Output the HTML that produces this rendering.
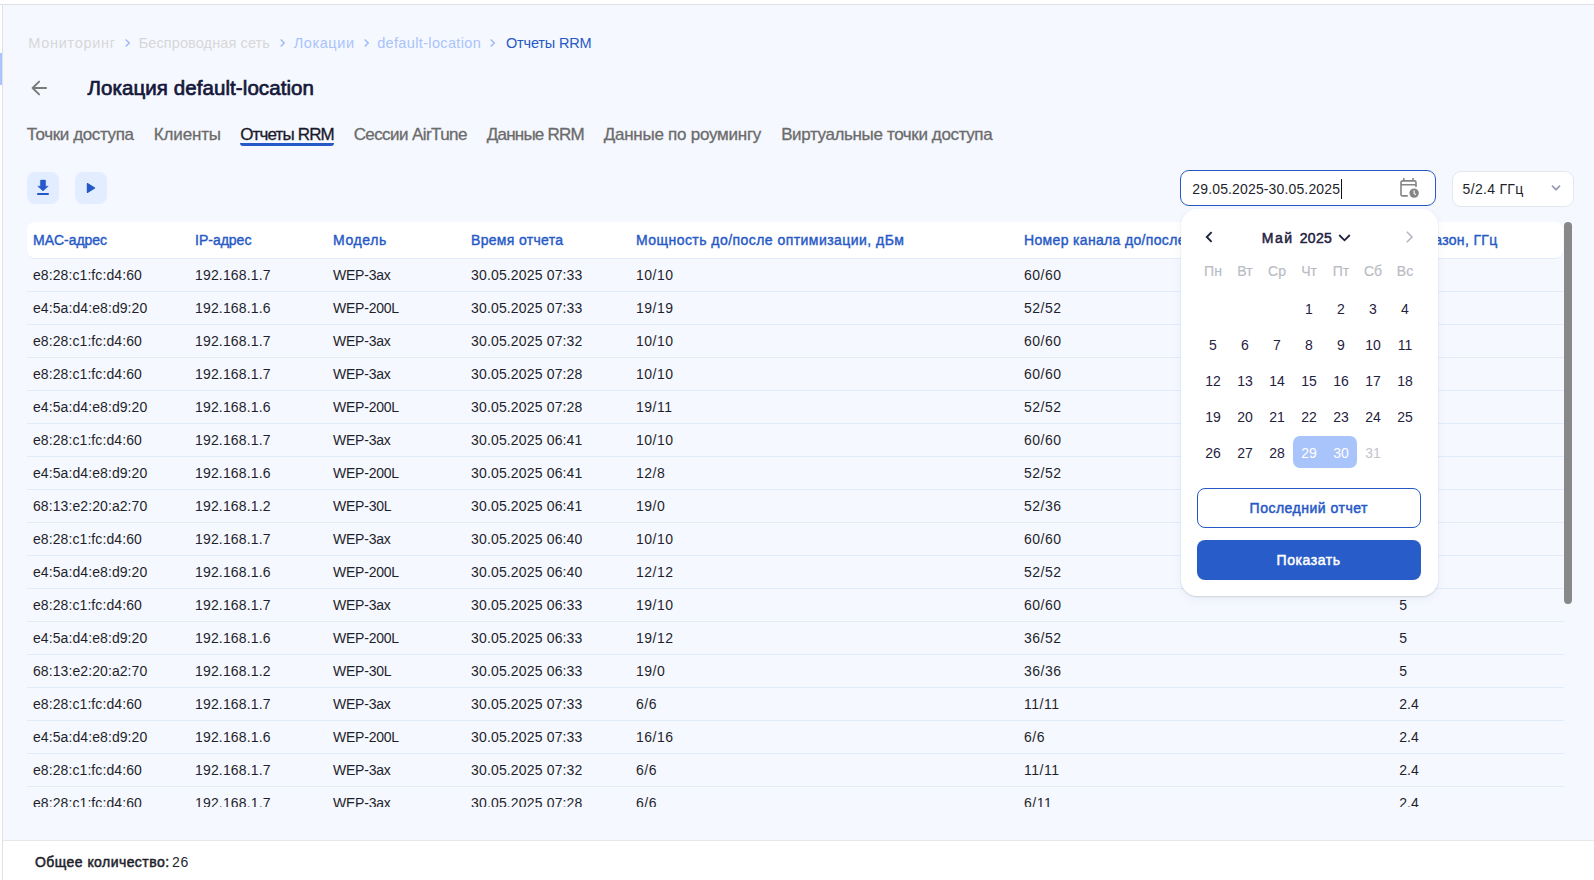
<!DOCTYPE html>
<html lang="ru"><head><meta charset="utf-8"><title>Отчеты RRM</title>
<style>
*{box-sizing:border-box;margin:0;padding:0}
html,body{width:1594px;height:880px;overflow:hidden}
body{background:#fff;font-family:"Liberation Sans",sans-serif;color:#1f1f2b;position:relative;font-size:14px}
.main{position:absolute;left:2px;top:4px;width:1592px;height:876px;background:#f5f8ff;border-left:1px solid #e0e1e4;border-top:1px solid #e0e1e4}
.topline{position:absolute;left:0;top:4px;width:3px;height:1px;background:#e0e1e4}
.sidehl{position:absolute;left:0;top:53px;width:2px;height:32px;background:#a9c5fc}
.abs{position:absolute;white-space:nowrap}
.t{position:absolute;white-space:nowrap}
.bc{top:34px;left:0;font-size:14.5px;line-height:18px;height:18px;color:#d7d7d7}
.bc .t{top:0}
.bc .l{color:#a9c4fb}
.bc .cur{color:#2759c6}
.bc svg{position:absolute;top:4px}
.title{top:75px;font-size:20.5px;line-height:26px;font-weight:400;-webkit-text-stroke:0.7px currentColor;color:#15183a}
.tab{top:124px;font-size:17px;line-height:22px;color:#6b6b6b;-webkit-text-stroke:0.3px currentColor}
.tab.act{color:#1a1a2a}
.tab.act:after{content:"";position:absolute;left:0;right:0;bottom:0;height:3px;border-radius:0 0 3px 3px;background:#2459c7}
.ibtn{position:absolute;top:172px;width:32px;height:32px;border-radius:8px;background:#e2edff}
.ibtn svg{position:absolute;left:0;top:0}
.inp{position:absolute;left:1180px;top:170px;width:256px;height:36px;border:1px solid #2759c6;border-radius:9px;background:#fff}
.inp .t{top:9px;font-size:14px;line-height:18px;color:#1f1f2b}
.inp .cur{position:absolute;left:160px;top:8px;width:1px;height:20px;background:#111}
.inp svg{position:absolute;left:218px;top:6px}
.select{position:absolute;left:1452px;top:171px;width:122px;height:36px;border:1px solid #e4e7ef;border-radius:9px;background:#fff}
.select .t{top:8px;font-size:14px;line-height:18px;color:#1f1f2b}
.select svg{position:absolute;left:97px;top:12px}
.thead{position:absolute;left:27px;top:222px;width:1536px;height:37px;background:#fff;border-radius:8px;border-bottom:1px solid #e3ecfb}
.thead .t{top:9px;font-size:14px;line-height:18px;font-weight:400;-webkit-text-stroke:0.4px currentColor;color:#2759c6}
.tbody{position:absolute;left:27px;top:259px;width:1537px;height:548px;overflow:hidden}
.tr{position:relative;height:33px;border-bottom:1px solid #e3ecfb}
.tr span{position:absolute;top:7px;font-size:14px;line-height:18px;color:#1f1f2b;white-space:nowrap}
.scroll{position:absolute;left:1564px;top:222px;width:8px;height:382px;border-radius:4px;background:#888}
.footer{position:absolute;left:3px;top:840px;width:1591px;height:40px;background:#fff;border-top:1px solid #e7e8ec}
.footer .t{top:12px;font-size:14px;line-height:18px;color:#1f1f2b}
.footer b{font-weight:400;-webkit-text-stroke:0.5px currentColor}
.pop{position:absolute;left:1181px;top:209px;width:257px;height:387px;background:#fff;border-radius:16px;box-shadow:0 1px 2px rgba(0,0,0,.13),0 3px 10px rgba(40,60,120,.06)}
.pop .hd{position:absolute;left:0;top:19px;width:100%;height:20px;font-size:14px;line-height:20px;font-weight:400;-webkit-text-stroke:0.5px currentColor;color:#1f2240}
.pop .hd .t{top:0}
.pop .hd svg{position:absolute}
.wd{position:absolute;left:16px;top:52px;width:224px;height:20px;display:flex}
.wd span{width:32px;text-align:center;font-size:14px;line-height:20px;color:#babcc5;-webkit-text-stroke:0.2px currentColor}
.wks{position:absolute;left:16px;top:83px;width:224px}
.wk{display:flex;height:32px;margin-bottom:4px}
.d{width:32px;height:32px;line-height:34px;text-align:center;font-size:14px;color:#1f2240}
.d.sel{background:#a9c4fb;color:#fff}
.d.s1{border-radius:7px 0 0 7px}
.d.s2{border-radius:0 7px 7px 0}
.d.dis{color:#c3c4cc}
.b1,.b2{position:absolute;left:16px;width:224px;height:40px;border-radius:8px;font-size:14px;line-height:18px;font-weight:400;-webkit-text-stroke:0.5px currentColor}
.b1 .t,.b2 .t{top:11px}
.b1{top:279px;border:1px solid #2759c6;color:#2759c6;background:#fff}
.b1 .t{top:10px}
.b2{top:331px;background:#285cc8;color:#fff}
</style></head><body>
<div class="sidehl"></div>
<div class="main"></div><div class="topline"></div>

<div class="abs bc">
<span id="bc1" class="t " style="left:28.33px;letter-spacing:0.690px;">Мониторинг</span>
<svg style="left:124px" width="7" height="10" viewBox="0 0 7 10"><path d="M1.7 1.5L5.2 5 1.7 8.5" fill="none" stroke="#9dbaf9" stroke-width="1.5"/></svg>
<span id="bc2" class="t " style="left:138.63px;letter-spacing:0.109px;">Беспроводная сеть</span>
<svg style="left:279px" width="7" height="10" viewBox="0 0 7 10"><path d="M1.7 1.5L5.2 5 1.7 8.5" fill="none" stroke="#9dbaf9" stroke-width="1.5"/></svg>
<span id="bc3" class="t l" style="left:293.72px;letter-spacing:0.576px;">Локации</span>
<svg style="left:363px" width="7" height="10" viewBox="0 0 7 10"><path d="M1.7 1.5L5.2 5 1.7 8.5" fill="none" stroke="#9dbaf9" stroke-width="1.5"/></svg>
<span id="bc4" class="t l" style="left:377.14px;letter-spacing:0.355px;">default-location</span>
<svg style="left:489px" width="7" height="10" viewBox="0 0 7 10"><path d="M1.7 1.5L5.2 5 1.7 8.5" fill="none" stroke="#9dbaf9" stroke-width="1.5"/></svg>
<span id="bc5" class="t cur" style="left:505.94px;letter-spacing:-0.172px;">Отчеты RRM</span>
</div>

<svg class="abs" style="left:30px;top:79px" width="18" height="18" viewBox="0 0 18 18"><path d="M16.1 9H2.6M9.1 2.6L2.6 9l6.5 6.4" fill="none" stroke="#7a7a7a" stroke-width="1.9" stroke-linecap="round" stroke-linejoin="round"/></svg>
<div id="title" class="t title" style="left:87.41px;letter-spacing:0.081px;">Локация default-location</div>

<div id="tab1" class="t tab" style="left:26.75px;letter-spacing:-0.366px;">Точки доступа</div>
<div id="tab2" class="t tab" style="left:153.83px;letter-spacing:-0.162px;">Клиенты</div>
<div id="tab3" class="t tab act" style="left:240.13px;letter-spacing:-0.840px;">Отчеты RRM</div>
<div id="tab4" class="t tab" style="left:353.64px;letter-spacing:-0.580px;">Сессии AirTune</div>
<div id="tab5" class="t tab" style="left:486.82px;letter-spacing:-0.789px;">Данные RRM</div>
<div id="tab6" class="t tab" style="left:603.68px;letter-spacing:-0.244px;">Данные по роумингу</div>
<div id="tab7" class="t tab" style="left:781.14px;letter-spacing:-0.370px;">Виртуальные точки доступа</div>

<div class="ibtn" style="left:27px"><svg width="32" height="32" viewBox="0 0 32 32"><path d="M13.4 8.8q0-.7.7-.7h3.8q.7 0 .7.7V14.2h2.6L16 19 10.8 14.2h2.6z" fill="#2459c7" stroke="#2459c7" stroke-width=".5" stroke-linejoin="round"/><rect x="10" y="21" width="12" height="1.9" rx=".9" fill="#2459c7"/></svg></div>
<div class="ibtn" style="left:75px"><svg width="32" height="32" viewBox="0 0 32 32"><path d="M12.4 11.6L19.6 16l-7.2 4.4z" fill="#2459c7" stroke="#2459c7" stroke-width="1.2" stroke-linejoin="round"/></svg></div>

<div class="inp"><span id="inp" class="t " style="left:11.34px;letter-spacing:0.142px;">29.05.2025-30.05.2025</span><i class="cur" id="cursor"></i>
<svg width="22" height="22" viewBox="0 0 22 22"><path d="M17 10V5.4a1.5 1.5 0 0 0-1.5-1.5h-12A1.5 1.5 0 0 0 2 5.4v12a1.5 1.5 0 0 0 1.5 1.5h5.3M2 7.8h15M4.8 1.1v3M14 1.1v3" fill="none" stroke="#858585" stroke-width="1.6"/><circle cx="15.1" cy="16.1" r="4.7" fill="#858585"/><path d="M15.1 13.3v2.9l1.7 1.7" fill="none" stroke="#fff" stroke-width="1.1"/></svg></div>

<div class="select"><span id="sel" class="t " style="left:9.60px;letter-spacing:0.303px;">5/2.4 ГГц</span><svg width="12" height="8" viewBox="0 0 12 8"><path d="M2 1.7L6 5.7l4-4" fill="none" stroke="#9a9db2" stroke-width="1.7"/></svg></div>

<div class="thead">
<span id="th1" class="t " style="left:6.00px;letter-spacing:-0.024px;">MAC-адрес</span>
<span id="th2" class="t " style="left:168.00px;letter-spacing:-0.001px;">IP-адрес</span>
<span id="th3" class="t " style="left:306.00px;letter-spacing:0.622px;">Модель</span>
<span id="th4" class="t " style="left:444.00px;letter-spacing:0.320px;">Время отчета</span>
<span id="th5" class="t " style="left:609.00px;letter-spacing:0.453px;">Мощность до/после оптимизации, дБм</span>
<span id="th6" class="t " style="left:997.00px;letter-spacing:0.338px;">Номер канала до/после оптимизации</span>
<span id="th7" class="t " style="left:1373.15px;letter-spacing:0.338px;">Диапазон, ГГц</span>
</div>
<div class="tbody">
<div class="tr"><span id="c0" class="c0" style="left:6.00px;letter-spacing:0.086px">e8:28:c1:fc:d4:60</span><span id="c1" class="c1" style="left:168.00px;letter-spacing:0.160px">192.168.1.7</span><span id="c2" class="c2" style="left:306.00px;letter-spacing:-0.223px">WEP-3ax</span><span id="c3" class="c3" style="left:444.00px;letter-spacing:0.157px">30.05.2025 07:33</span><span id="c4" class="c4" style="left:609.00px;letter-spacing:0.498px">10/10</span><span id="c5" class="c5" style="left:997.00px;letter-spacing:0.520px">60/60</span><span id="c6" class="c6" style="left:1372.30px;letter-spacing:0.000px">5</span></div>
<div class="tr"><span class="c0" style="left:6.00px;letter-spacing:0.086px">e4:5a:d4:e8:d9:20</span><span class="c1" style="left:168.00px;letter-spacing:0.160px">192.168.1.6</span><span id="c2b" class="c2" style="left:306.00px;letter-spacing:-0.223px">WEP-200L</span><span class="c3" style="left:444.00px;letter-spacing:0.157px">30.05.2025 07:33</span><span class="c4" style="left:609.00px;letter-spacing:0.498px">19/19</span><span class="c5" style="left:997.00px;letter-spacing:0.520px">52/52</span><span class="c6" style="left:1372.30px;letter-spacing:0.000px">5</span></div>
<div class="tr"><span class="c0" style="left:6.00px;letter-spacing:0.086px">e8:28:c1:fc:d4:60</span><span class="c1" style="left:168.00px;letter-spacing:0.160px">192.168.1.7</span><span class="c2" style="left:306.00px;letter-spacing:-0.223px">WEP-3ax</span><span class="c3" style="left:444.00px;letter-spacing:0.157px">30.05.2025 07:32</span><span class="c4" style="left:609.00px;letter-spacing:0.498px">10/10</span><span class="c5" style="left:997.00px;letter-spacing:0.520px">60/60</span><span class="c6" style="left:1372.30px;letter-spacing:0.000px">5</span></div>
<div class="tr"><span class="c0" style="left:6.00px;letter-spacing:0.086px">e8:28:c1:fc:d4:60</span><span class="c1" style="left:168.00px;letter-spacing:0.160px">192.168.1.7</span><span class="c2" style="left:306.00px;letter-spacing:-0.223px">WEP-3ax</span><span class="c3" style="left:444.00px;letter-spacing:0.157px">30.05.2025 07:28</span><span class="c4" style="left:609.00px;letter-spacing:0.498px">10/10</span><span class="c5" style="left:997.00px;letter-spacing:0.520px">60/60</span><span class="c6" style="left:1372.30px;letter-spacing:0.000px">5</span></div>
<div class="tr"><span class="c0" style="left:6.00px;letter-spacing:0.086px">e4:5a:d4:e8:d9:20</span><span class="c1" style="left:168.00px;letter-spacing:0.160px">192.168.1.6</span><span class="c2" style="left:306.00px;letter-spacing:-0.223px">WEP-200L</span><span class="c3" style="left:444.00px;letter-spacing:0.157px">30.05.2025 07:28</span><span class="c4" style="left:609.00px;letter-spacing:0.498px">19/11</span><span class="c5" style="left:997.00px;letter-spacing:0.520px">52/52</span><span class="c6" style="left:1372.30px;letter-spacing:0.000px">5</span></div>
<div class="tr"><span class="c0" style="left:6.00px;letter-spacing:0.086px">e8:28:c1:fc:d4:60</span><span class="c1" style="left:168.00px;letter-spacing:0.160px">192.168.1.7</span><span class="c2" style="left:306.00px;letter-spacing:-0.223px">WEP-3ax</span><span class="c3" style="left:444.00px;letter-spacing:0.157px">30.05.2025 06:41</span><span class="c4" style="left:609.00px;letter-spacing:0.498px">10/10</span><span class="c5" style="left:997.00px;letter-spacing:0.520px">60/60</span><span class="c6" style="left:1372.30px;letter-spacing:0.000px">5</span></div>
<div class="tr"><span class="c0" style="left:6.00px;letter-spacing:0.086px">e4:5a:d4:e8:d9:20</span><span class="c1" style="left:168.00px;letter-spacing:0.160px">192.168.1.6</span><span class="c2" style="left:306.00px;letter-spacing:-0.223px">WEP-200L</span><span class="c3" style="left:444.00px;letter-spacing:0.157px">30.05.2025 06:41</span><span class="c4" style="left:609.00px;letter-spacing:0.498px">12/8</span><span class="c5" style="left:997.00px;letter-spacing:0.520px">52/52</span><span class="c6" style="left:1372.30px;letter-spacing:0.000px">5</span></div>
<div class="tr"><span class="c0" style="left:6.00px;letter-spacing:0.086px">68:13:e2:20:a2:70</span><span class="c1" style="left:168.00px;letter-spacing:0.160px">192.168.1.2</span><span class="c2" style="left:306.00px;letter-spacing:-0.223px">WEP-30L</span><span class="c3" style="left:444.00px;letter-spacing:0.157px">30.05.2025 06:41</span><span class="c4" style="left:609.00px;letter-spacing:0.498px">19/0</span><span class="c5" style="left:997.00px;letter-spacing:0.520px">52/36</span><span class="c6" style="left:1372.30px;letter-spacing:0.000px">5</span></div>
<div class="tr"><span class="c0" style="left:6.00px;letter-spacing:0.086px">e8:28:c1:fc:d4:60</span><span class="c1" style="left:168.00px;letter-spacing:0.160px">192.168.1.7</span><span class="c2" style="left:306.00px;letter-spacing:-0.223px">WEP-3ax</span><span class="c3" style="left:444.00px;letter-spacing:0.157px">30.05.2025 06:40</span><span class="c4" style="left:609.00px;letter-spacing:0.498px">10/10</span><span class="c5" style="left:997.00px;letter-spacing:0.520px">60/60</span><span class="c6" style="left:1372.30px;letter-spacing:0.000px">5</span></div>
<div class="tr"><span class="c0" style="left:6.00px;letter-spacing:0.086px">e4:5a:d4:e8:d9:20</span><span class="c1" style="left:168.00px;letter-spacing:0.160px">192.168.1.6</span><span class="c2" style="left:306.00px;letter-spacing:-0.223px">WEP-200L</span><span class="c3" style="left:444.00px;letter-spacing:0.157px">30.05.2025 06:40</span><span class="c4" style="left:609.00px;letter-spacing:0.498px">12/12</span><span class="c5" style="left:997.00px;letter-spacing:0.520px">52/52</span><span class="c6" style="left:1372.30px;letter-spacing:0.000px">5</span></div>
<div class="tr"><span class="c0" style="left:6.00px;letter-spacing:0.086px">e8:28:c1:fc:d4:60</span><span class="c1" style="left:168.00px;letter-spacing:0.160px">192.168.1.7</span><span class="c2" style="left:306.00px;letter-spacing:-0.223px">WEP-3ax</span><span class="c3" style="left:444.00px;letter-spacing:0.157px">30.05.2025 06:33</span><span class="c4" style="left:609.00px;letter-spacing:0.498px">19/10</span><span class="c5" style="left:997.00px;letter-spacing:0.520px">60/60</span><span class="c6" style="left:1372.30px;letter-spacing:0.000px">5</span></div>
<div class="tr"><span class="c0" style="left:6.00px;letter-spacing:0.086px">e4:5a:d4:e8:d9:20</span><span class="c1" style="left:168.00px;letter-spacing:0.160px">192.168.1.6</span><span class="c2" style="left:306.00px;letter-spacing:-0.223px">WEP-200L</span><span class="c3" style="left:444.00px;letter-spacing:0.157px">30.05.2025 06:33</span><span class="c4" style="left:609.00px;letter-spacing:0.498px">19/12</span><span class="c5" style="left:997.00px;letter-spacing:0.520px">36/52</span><span class="c6" style="left:1372.30px;letter-spacing:0.000px">5</span></div>
<div class="tr"><span class="c0" style="left:6.00px;letter-spacing:0.086px">68:13:e2:20:a2:70</span><span class="c1" style="left:168.00px;letter-spacing:0.160px">192.168.1.2</span><span class="c2" style="left:306.00px;letter-spacing:-0.223px">WEP-30L</span><span class="c3" style="left:444.00px;letter-spacing:0.157px">30.05.2025 06:33</span><span class="c4" style="left:609.00px;letter-spacing:0.498px">19/0</span><span class="c5" style="left:997.00px;letter-spacing:0.520px">36/36</span><span class="c6" style="left:1372.30px;letter-spacing:0.000px">5</span></div>
<div class="tr"><span class="c0" style="left:6.00px;letter-spacing:0.086px">e8:28:c1:fc:d4:60</span><span class="c1" style="left:168.00px;letter-spacing:0.160px">192.168.1.7</span><span class="c2" style="left:306.00px;letter-spacing:-0.223px">WEP-3ax</span><span class="c3" style="left:444.00px;letter-spacing:0.157px">30.05.2025 07:33</span><span class="c4" style="left:609.00px;letter-spacing:0.498px">6/6</span><span class="c5" style="left:997.00px;letter-spacing:0.520px">11/11</span><span class="c6" style="left:1372.30px;letter-spacing:0.000px">2.4</span></div>
<div class="tr"><span class="c0" style="left:6.00px;letter-spacing:0.086px">e4:5a:d4:e8:d9:20</span><span class="c1" style="left:168.00px;letter-spacing:0.160px">192.168.1.6</span><span class="c2" style="left:306.00px;letter-spacing:-0.223px">WEP-200L</span><span class="c3" style="left:444.00px;letter-spacing:0.157px">30.05.2025 07:33</span><span class="c4" style="left:609.00px;letter-spacing:0.498px">16/16</span><span class="c5" style="left:997.00px;letter-spacing:0.520px">6/6</span><span class="c6" style="left:1372.30px;letter-spacing:0.000px">2.4</span></div>
<div class="tr"><span class="c0" style="left:6.00px;letter-spacing:0.086px">e8:28:c1:fc:d4:60</span><span class="c1" style="left:168.00px;letter-spacing:0.160px">192.168.1.7</span><span class="c2" style="left:306.00px;letter-spacing:-0.223px">WEP-3ax</span><span class="c3" style="left:444.00px;letter-spacing:0.157px">30.05.2025 07:32</span><span class="c4" style="left:609.00px;letter-spacing:0.498px">6/6</span><span class="c5" style="left:997.00px;letter-spacing:0.520px">11/11</span><span class="c6" style="left:1372.30px;letter-spacing:0.000px">2.4</span></div>
<div class="tr"><span class="c0" style="left:6.00px;letter-spacing:0.086px">e8:28:c1:fc:d4:60</span><span class="c1" style="left:168.00px;letter-spacing:0.160px">192.168.1.7</span><span class="c2" style="left:306.00px;letter-spacing:-0.223px">WEP-3ax</span><span class="c3" style="left:444.00px;letter-spacing:0.157px">30.05.2025 07:28</span><span class="c4" style="left:609.00px;letter-spacing:0.498px">6/6</span><span class="c5" style="left:997.00px;letter-spacing:0.520px">6/11</span><span class="c6" style="left:1372.30px;letter-spacing:0.000px">2.4</span></div>
</div>
<div class="scroll"></div>

<div class="footer"><span id="ft1" class="t " style="left:31.99px;letter-spacing:0.444px;"><b>Общее количество:</b></span><span id="ft2" class="t " style="left:168.90px;letter-spacing:0.823px;">26</span></div>

<div class="pop" id="pop">
<div class="hd">
<svg style="left:23px;top:2px" width="10" height="14" viewBox="0 0 10 14"><path d="M7.6 2.2L2.8 7l4.8 4.8" fill="none" stroke="#1f2240" stroke-width="1.9"/></svg>
<span id="mon" class="t " style="left:80.79px;letter-spacing:1.404px;">Май</span><span id="yr" class="t " style="left:118.69px;letter-spacing:0.309px;">2025</span>
<svg style="left:157px;top:5px" width="13" height="10" viewBox="0 0 13 10"><path d="M1.2 2L6.5 7.3 11.8 2" fill="none" stroke="#1f2240" stroke-width="1.8"/></svg>
<svg style="left:224px;top:2px" width="10" height="14" viewBox="0 0 10 14"><path d="M1.8 1.8L7 7 1.8 12.2" fill="none" stroke="#b4b5bd" stroke-width="1.5"/></svg>
</div>
<div class="wd"><span>Пн</span><span>Вт</span><span>Ср</span><span>Чт</span><span>Пт</span><span>Сб</span><span>Вс</span></div>
<div class="wks">
<div class="wk"><span class="d"></span><span class="d"></span><span class="d"></span><span class="d">1</span><span class="d">2</span><span class="d">3</span><span class="d">4</span></div>
<div class="wk"><span class="d">5</span><span class="d">6</span><span class="d">7</span><span class="d">8</span><span class="d">9</span><span class="d">10</span><span class="d">11</span></div>
<div class="wk"><span class="d">12</span><span class="d">13</span><span class="d">14</span><span class="d">15</span><span class="d">16</span><span class="d">17</span><span class="d">18</span></div>
<div class="wk"><span class="d">19</span><span class="d">20</span><span class="d">21</span><span class="d">22</span><span class="d">23</span><span class="d">24</span><span class="d">25</span></div>
<div class="wk"><span class="d">26</span><span class="d">27</span><span class="d">28</span><span class="d sel s1">29</span><span class="d sel s2">30</span><span class="d dis">31</span><span class="d"></span></div>
</div>
<div class="b1"><span id="b1" class="t " style="left:51.60px;letter-spacing:0.498px;">Последний отчет</span></div>
<div class="b2"><span id="b2" class="t " style="left:79.49px;letter-spacing:0.594px;">Показать</span></div>
</div>
</body></html>
